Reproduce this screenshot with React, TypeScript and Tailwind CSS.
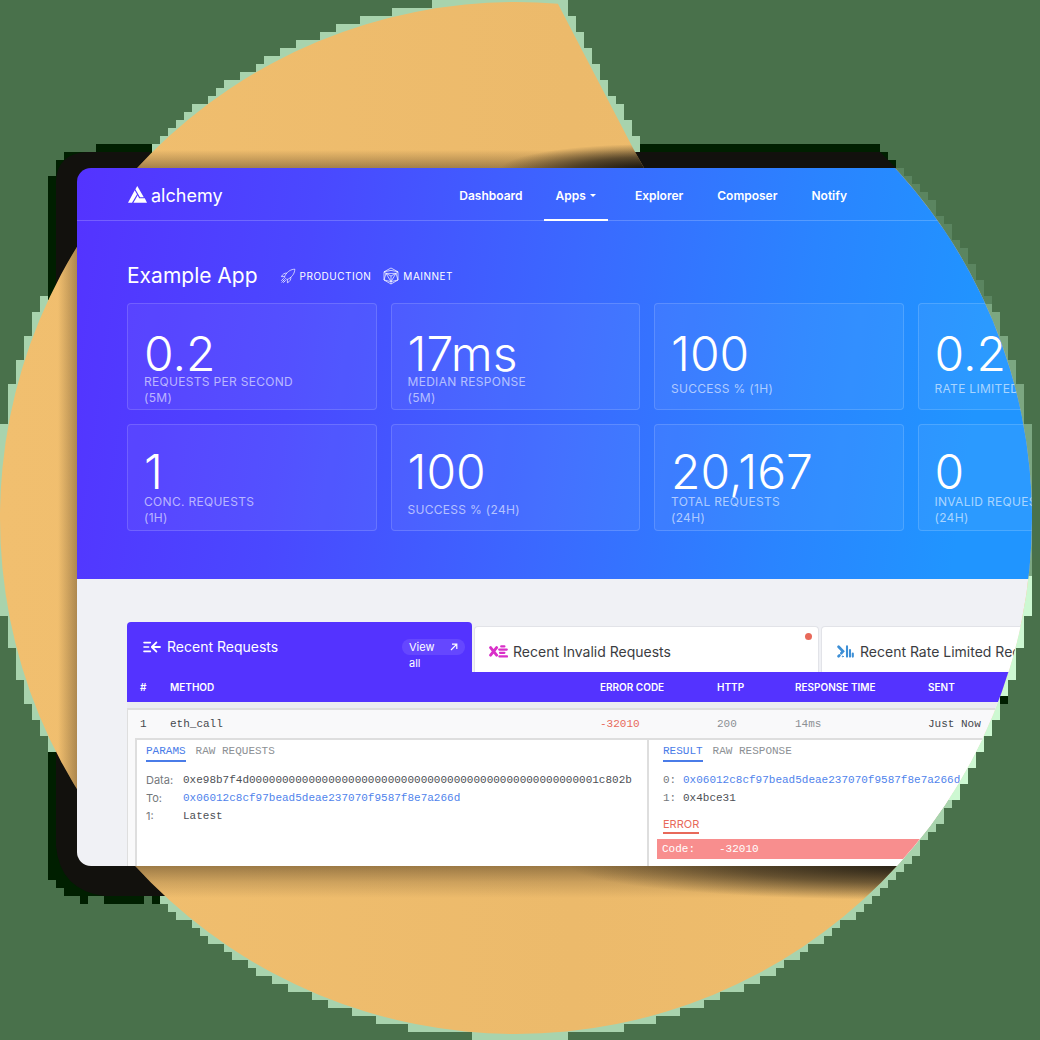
import type { ReactNode } from "react";

const CX = 516;
const CY = 518;
const R = 516;
const CELL = 8;

function halfWidth(y: number) {
  const d = Math.abs(y - CY);
  return d >= R ? 0 : Math.sqrt(R * R - d * d);
}

function cutX(y: number) {
  return 556 + (y * 78) / 150;
}

function rightTone(y: number) {
  if (y >= 152 && y < 300) return "#5b8560";
  if (y >= 300 && y < 576) return "#7ca781";
  if (y >= 576 && y < 800) return "#cdf8d2";
  return "#a8d3ad";
}

function haloRows() {
  const rows: { y: number; left: number; right: number; tone: string }[] = [];
  for (let y = 0; y < 1032; y += CELL) {
    const near = y + CELL < CY ? y + CELL : y > CY ? y : CY;
    const w = halfWidth(near);
    const left = Math.floor((CX - w) / CELL) * CELL;
    let right = Math.ceil((CX + w) / CELL) * CELL;
    if (y < 152) right = Math.ceil((cutX(y + CELL) + 2) / CELL) * CELL;
    rows.push({ y, left, right, tone: rightTone(y) });
  }
  rows.push({ y: 1032, left: 472, right: 568, tone: "#a8d3ad" });
  return rows;
}

function Backdrop() {
  return (
    <svg
      className="absolute inset-x-0 top-0 w-full"
      viewBox="0 0 1040 1040"
      aria-hidden="true"
    >
      <defs>
        <clipPath id="disc">
          <path d="M0 0H556L634 150L644 168H1040V1040H0Z" />
        </clipPath>
        <clipPath id="ring" clipPath="url(#disc)">
          <circle cx={CX} cy={CY} r={R} />
        </clipPath>
        <linearGradient id="sand" x1="0" y1="0" x2="1" y2="0">
          <stop offset="0" stopColor="#f1bf6f" />
          <stop offset="0.55" stopColor="#ecba6b" />
          <stop offset="1" stopColor="#f0be6d" />
        </linearGradient>
        <linearGradient id="below" x1="0" y1="0" x2="0" y2="1">
          <stop offset="0" stopColor="#20150a" stopOpacity="0.4" />
          <stop offset="0.5" stopColor="#20150a" stopOpacity="0.16" />
          <stop offset="1" stopColor="#20150a" stopOpacity="0" />
        </linearGradient>
        <linearGradient id="above" x1="0" y1="1" x2="0" y2="0">
          <stop offset="0" stopColor="#20150a" stopOpacity="0.36" />
          <stop offset="1" stopColor="#20150a" stopOpacity="0" />
        </linearGradient>
        <linearGradient id="beside" x1="1" y1="0" x2="0" y2="0">
          <stop offset="0" stopColor="#20150a" stopOpacity="0.32" />
          <stop offset="1" stopColor="#20150a" stopOpacity="0" />
        </linearGradient>
        <radialGradient id="pool">
          <stop offset="0" stopColor="#12110d" />
          <stop offset="0.5" stopColor="#12110d" stopOpacity="0.6" />
          <stop offset="1" stopColor="#12110d" stopOpacity="0" />
        </radialGradient>
      </defs>

      <g shapeRendering="crispEdges">
        {haloRows().map((r) => (
          <g key={r.y}>
            <rect x={r.left} y={r.y} width={CX - r.left} height={CELL} fill="#a8d3ad" />
            <rect x={CX} y={r.y} width={r.right - CX} height={CELL} fill={r.tone} />
          </g>
        ))}
        <path
          fill="#001f00"
          d="M48 280V176H56V160H64V152H96V144H152V300H48ZM560 176V152H640V144H880V152H888V160H896V176ZM48 752V880H56V888H64V896H80V904H88V896H104V904H144V896H152V904H160V896H180V740H56V752Z"
        />
        <path fill="#001f00" d="M1000 696h8v8h-8z" />
      </g>
      <path
        fill="#12110d"
        d="M56 280V180Q58 154 86 152H150V300H56ZM560 176V152H880L896 168V176ZM56 752V846Q60 890 104 896H170V740H56Z"
      />

      <g clipPath="url(#ring)">
        <rect width="1040" height="1040" fill="url(#sand)" />
        <rect x="130" y="150" width="520" height="18" fill="url(#above)" />
        <rect x="58" y="240" width="19" height="560" fill="url(#beside)" />
        <rect x="130" y="866" width="780" height="32" fill="url(#below)" />
        <ellipse cx="650" cy="170" rx="150" ry="26" fill="url(#pool)" />
        <ellipse cx="910" cy="866" rx="340" ry="34" fill="url(#pool)" opacity="0.85" />
      </g>
    </svg>
  );
}

function Logo() {
  return (
    <a href="#home" className="flex items-center gap-1 text-lg leading-6 text-white">
      <svg className="mb-[3px]" width="19" height="17" viewBox="0 0 19 17" fill="currentColor" aria-hidden="true">
        <path d="M9.3 0L15.8 11.2H12L7.4 3.3Z" />
        <path d="M6.7 4.2L9 8.2L4 16.8H0Z" />
        <path d="M9.6 9.2L11.2 12.2H16.8L19 16.8H5.4L7.6 12.9Z" />
      </svg>
      <span>alchemy</span>
    </a>
  );
}

function Rocket() {
  return (
    <svg width="16" height="16" viewBox="0 0 16 16" fill="none" stroke="currentColor" strokeWidth="0.7" aria-hidden="true">
      <path d="M14.8 1.2C11 1.4 8 3 5.2 7.2L4.4 9.2L6.8 11.6L8.8 10.8C13 8 14.6 5 14.8 1.2Z" />
      <path d="M7 5.2C4.6 4.8 2.6 6.2 1.4 8.6L4.6 8.6M10.8 9C11.2 11.4 9.8 13.6 7.4 14.8L7.4 11.6" />
      <path d="M3.8 10.2L1.2 12.8M4.8 11.2L1.6 14.6M5.8 12.2L3.2 14.8M3.2 12.2L4.4 13.4" />
    </svg>
  );
}

function Cube() {
  return (
    <svg width="16" height="18" viewBox="0 0 16 18" fill="none" stroke="currentColor" strokeWidth="0.7" aria-hidden="true">
      <path d="M8 1L15 4.8V13L8 17L1 13V4.8Z" />
      <path d="M1 4.8L8 3.4L15 4.8M3 6.4H13L8 14.6ZM1 4.8L3 6.4L1 13L8 14.6L15 13L13 6.4L15 4.8M8 14.6V17M3 6.4L8 9V14.6M13 6.4L8 9" />
    </svg>
  );
}

function IncomingIcon() {
  return (
    <svg width="18" height="12" viewBox="0 0 18 12" fill="none" stroke="currentColor" strokeWidth="1.8" strokeLinecap="round" strokeLinejoin="round" aria-hidden="true">
      <path d="M1 1.6H7.4M1 6H5.6M1 10.4H7.4" strokeWidth="1.6" />
      <path d="M13.4 1.4L8.8 6L13.4 10.6M9.2 6H17" />
    </svg>
  );
}

function InvalidIcon() {
  return (
    <svg width="19" height="13" viewBox="0 0 19 13" fill="none" stroke="#d92fc8" strokeLinecap="round" aria-hidden="true">
      <path d="M1.6 2.6L7.6 10.2M7.6 2.6L1.6 10.2" strokeWidth="2.9" />
      <path d="M12.2 1.4H15.4M10.2 4.6H17.8M11 7.8H15.4M10.4 11.4H18" strokeWidth="2.2" />
    </svg>
  );
}

function LimitedIcon() {
  return (
    <svg width="17" height="13" viewBox="0 0 17 13" fill="none" stroke="#3d8fd6" strokeLinecap="round" aria-hidden="true">
      <path d="M1.6 1.8L6 6.4L4.4 8.2M1.6 11.2L2.4 10.4" strokeWidth="2.7" />
      <path d="M10 1.4V11.6M13 5V11.6M15.8 8.6V11.6" strokeWidth="2.1" />
      <circle cx="5.8" cy="11.4" r="0.5" />
    </svg>
  );
}

const navItems = ["Dashboard", "Apps", "Explorer", "Composer", "Notify"];

function Header() {
  return (
    <header className="flex h-[53px] items-stretch justify-between border-b border-white/20 pr-[168px] pl-[51px]">
      <div className="flex items-center pt-1">
        <Logo />
      </div>
      <nav className="-mb-px flex text-xs font-semibold text-white">
        {navItems.map((item) => (
          <a
            key={item}
            href={"#" + item.toLowerCase()}
            className={
              item === "Apps"
                ? "mr-[10px] ml-1 flex items-center gap-1 border-b-2 border-white px-3 pt-1"
                : "flex items-center border-b-2 border-transparent px-[17px] pt-1"
            }
          >
            {item}
            {item === "Apps" && (
              <svg width="6" height="3" viewBox="0 0 6 3" fill="currentColor" aria-hidden="true">
                <path d="M0 0H6L3 3Z" />
              </svg>
            )}
          </a>
        ))}
      </nav>
    </header>
  );
}

const stats = [
  { value: "0.2", label: "REQUESTS PER SECOND", span: "(5M)" },
  { value: "17ms", label: "MEDIAN RESPONSE", span: "(5M)" },
  { value: "100", label: "SUCCESS % (1H)" },
  { value: "0.2", label: "RATE LIMITED (1H)" },
  { value: "1", label: "CONC. REQUESTS", span: "(1H)" },
  { value: "100", label: "SUCCESS % (24H)" },
  { value: "20,167", label: "TOTAL REQUESTS", span: "(24H)" },
  { value: "0", label: "INVALID REQUESTS", span: "(24H)" },
];

function Stats() {
  return (
    <dl className="mt-[14px] grid grid-cols-4 gap-[14px]">
      {stats.map((s, i) => (
        <div
          key={i}
          className={
            "flex h-[107px] flex-col justify-between rounded border border-white/15 bg-white/5 px-4 " +
            (i < 4 ? "pt-[30px]" : "pt-[27px]")
          }
        >
          <dd className="text-5xl leading-[40px] font-light text-white">{s.value}</dd>
          <dt className={(s.span ? "pb-1 " : "pb-3 ") + "text-xs leading-4 tracking-wide text-white/60"}>
            {s.label}
            {s.span && <span className="block">{s.span}</span>}
          </dt>
        </div>
      ))}
    </dl>
  );
}

function Hero() {
  return (
    <section className="h-[411px] bg-linear-[98deg,#5433ff_0%,#4a48ff_24%,#3a6aff_52%,#2a84ff_74%,#2095ff_92%]">
      <Header />
      <div className="w-[1090px] pt-[42px] pl-[50px] text-white">
        <div className="flex h-[26px] items-center">
          <h1 className="text-[21px] leading-6">Example App</h1>
          <span className="ml-[22px] flex items-center gap-1 text-[10px] tracking-wider">
            <Rocket />
            PRODUCTION
          </span>
          <span className="ml-3 flex items-center gap-1 text-[10px] tracking-wider">
            <Cube />
            MAINNET
          </span>
        </div>
        <Stats />
      </div>
    </section>
  );
}

function Tabs() {
  return (
    <div className="flex items-end" role="tablist">
      <div className="flex h-[50px] w-[345px] items-start justify-between rounded-t bg-[#5433ff] pt-[17px] pr-[7px] pl-4 text-white">
        <button type="button" role="tab" aria-selected="true" className="flex items-center gap-[6px] text-sm leading-4">
          <IncomingIcon />
          Recent Requests
        </button>
        <a href="#all" className="flex h-4 w-[63px] items-start justify-between rounded-full bg-white/10 px-[7px] text-[11px] leading-4">
          <span className="w-6">View all</span>
          <svg className="mt-1" width="8" height="8" viewBox="0 0 8 8" fill="none" stroke="currentColor" strokeWidth="1.2" aria-hidden="true">
            <path d="M1 7L6.6 1.4M2 1.2H6.8V6" />
          </svg>
        </a>
      </div>
      <button type="button" role="tab" aria-selected="false" className="relative mx-[2px] flex h-[46px] w-[345px] items-center gap-[5px] rounded-t border border-b-0 border-[#e2e3e8] bg-white pt-1 pl-[14px] text-sm text-[#3b3d42]">
        <InvalidIcon />
        Recent Invalid Requests
        <span className="absolute top-[6px] right-[6px] size-[7px] rounded-full bg-[#e8695a]" />
      </button>
      <button type="button" role="tab" aria-selected="false" className="flex h-[46px] w-[346px] items-center gap-[6px] rounded-t border border-b-0 border-[#e2e3e8] bg-white pt-1 pl-[15px] text-sm text-[#3b3d42]">
        <LimitedIcon />
        Recent Rate Limited Requests
      </button>
    </div>
  );
}

function SubTabs({ active, other }: { active: string; other: string }) {
  return (
    <div className="flex gap-[10px] font-['Liberation_Mono',monospace] text-[11px] leading-4">
      <button type="button" className="border-b-2 border-[#4a7ce8] pb-px text-[#4a7ce8]">{active}</button>
      <button type="button" className="border-b-2 border-transparent pb-px text-[#8c9094]">{other}</button>
    </div>
  );
}

function Field({ name, narrow, mono, children }: { name: string; narrow?: boolean; mono?: boolean; children: ReactNode }) {
  return (
    <div className="flex leading-[18px]">
      <dt className={(narrow ? "w-5 " : "w-[37px] ") + (mono ? "font-['Liberation_Mono',monospace] " : "") + "shrink-0 text-[11px] text-[#74787c]"}>{name}</dt>
      <dd className="font-['Liberation_Mono',monospace] text-[11px] whitespace-nowrap text-[#4d5055]">{children}</dd>
    </div>
  );
}

function Details() {
  return (
    <div className="ml-[7px] flex h-[140px] border-t-2 border-l-2 border-[#dedede] bg-white font-normal">
      <div className="w-[512px] shrink-0 border-r-2 border-[#dedede] pt-[3px] pl-[9px]">
        <SubTabs active="PARAMS" other="RAW REQUESTS" />
        <dl className="mt-[9px]">
          <Field name="Data:">0xe98b7f4d00000000000000000000000000000000000000000000000000001c802b</Field>
          <Field name="To:">
            <a href="#to" className="text-[#4f83ec]">0x06012c8cf97bead5deae237070f9587f8e7a266d</a>
          </Field>
          <Field name="1:">Latest</Field>
        </dl>
      </div>
      <div className="flex-1 pt-[3px] pl-2">
        <div className="pl-[6px]">
          <SubTabs active="RESULT" other="RAW RESPONSE" />
          <dl className="mt-[9px]">
            <Field name="0:" narrow mono>
              <a href="#result" className="text-[#4f83ec]">0x06012c8cf97bead5deae237070f9587f8e7a266d</a>
            </Field>
            <Field name="1:" narrow mono>0x4bce31</Field>
          </dl>
          <h2 className="mt-[9px] inline-block border-b-2 border-[#e8695a] text-[11px] leading-4 text-[#e8695a]">ERROR</h2>
        </div>
        <dl className="mt-[5px] font-['Liberation_Mono',monospace] text-[11px] leading-5">
          <div className="flex bg-[#f88e8e] pl-[5px] text-white">
            <dt className="w-[57px]">Code:</dt>
            <dd>-32010</dd>
          </div>
          <div className="flex pt-[2px] pl-[5px] text-[#45484d]">
            <dt className="w-[57px]">Message:</dt>
            <dd>Execution failed</dd>
          </div>
        </dl>
      </div>
    </div>
  );
}

function Requests() {
  return (
    <section className="h-[287px] bg-[#f0f1f5] pt-[43px]">
      <div className="ml-[50px] w-[1040px]">
        <Tabs />
        <table className="w-full table-fixed border-separate border-spacing-0 text-left">
          <colgroup>
            <col className="w-[43px]" />
            <col className="w-[430px]" />
            <col className="w-[117px]" />
            <col className="w-[78px]" />
            <col className="w-[133px]" />
            <col />
          </colgroup>
          <thead>
            <tr className="h-[30px] bg-[#5433ff] text-[10px] text-white">
              <th className="pl-[13px] font-semibold">#</th>
              <th className="font-semibold">METHOD</th>
              <th className="font-semibold">ERROR CODE</th>
              <th className="font-semibold">HTTP</th>
              <th className="font-semibold">RESPONSE TIME</th>
              <th className="font-semibold">SENT</th>
            </tr>
          </thead>
          <tbody className="bg-[#f9f9fa] font-['Liberation_Mono',monospace] text-[11px]">
            <tr className="h-2 bg-[#ececf1]">
              <td colSpan={6} className="border-b-2 border-[#dedede]" />
            </tr>
            <tr className="h-7 text-[#45484d]">
              <td className="border-l border-[#dedede] pl-3">1</td>
              <td>eth_call</td>
              <td className="text-[#e8695a]">-32010</td>
              <td className="text-[#8c9094]">200</td>
              <td className="text-[#8c9094]">14ms</td>
              <td>Just Now</td>
            </tr>
            <tr>
              <td colSpan={6} className="border-l border-[#dedede] font-['Inter',sans-serif]">
                <Details />
              </td>
            </tr>
          </tbody>
        </table>
      </div>
    </section>
  );
}

export default function App() {
  return (
    <div className="relative min-h-[1040px] overflow-hidden bg-[#49714b] font-['Inter',sans-serif]">
      <Backdrop />
      <div className="relative pt-[2px] pr-2 pl-[77px]">
        <div className="h-[1032px] overflow-hidden rounded-r-[516px] pt-[166px]">
          <main className="h-[698px] overflow-hidden rounded-l-[14px]">
            <Hero />
            <Requests />
          </main>
        </div>
      </div>
    </div>
  );
}
